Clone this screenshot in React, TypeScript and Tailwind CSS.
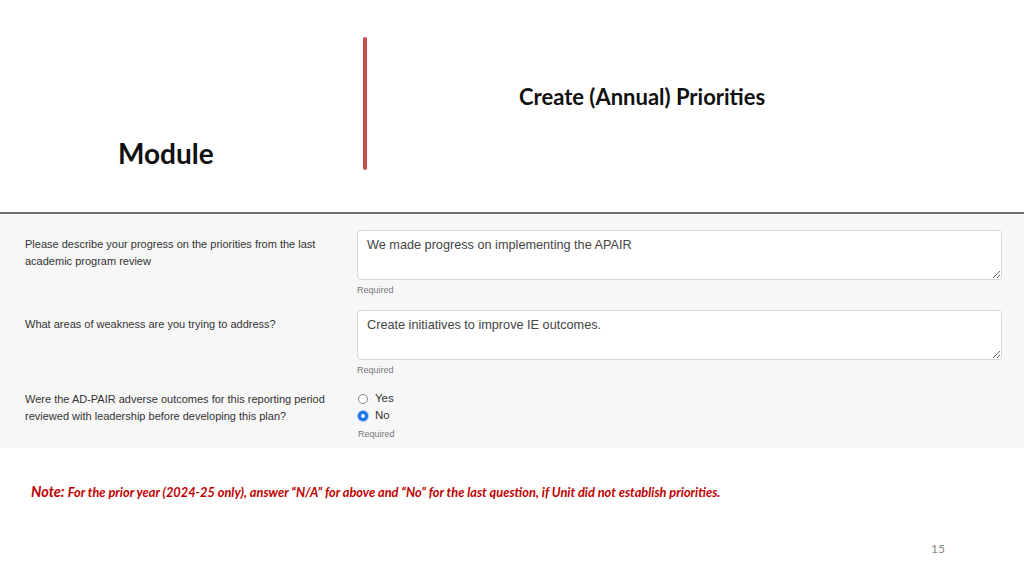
import React from "react";

const formFont = { fontFamily: '"Liberation Sans", Arial, sans-serif' };
const slideFont = { fontFamily: 'Lato, "Open Sans", sans-serif' };

function Required() {
  return <div className="mt-[3px] text-[9px] leading-[14px] text-[#777]">Required</div>;
}

function AreaField({ label, value }: { label: string; value: string }) {
  return (
    <div className="flex">
      <div className="w-[357px] shrink-0 pl-[25px] pr-[24px] pt-[6px] text-[11px] leading-[17px] text-[#333]">
        {label}
      </div>
      <div className="flex-1">
        <textarea
          readOnly
          defaultValue={value}
          className="block h-[50px] w-full rounded-[4px] border border-[#d6d6d6] bg-white px-[9px] pt-[6px] text-[12.7px] leading-[17px] text-[#444] outline-none"
          style={formFont}
        />
        <Required />
      </div>
    </div>
  );
}

function Radio({ checked, label }: { checked?: boolean; label: string }) {
  return (
    <div className="flex h-[17px] items-center gap-[7px] pl-[0px]">
      {checked ? (
        <span className="flex h-[10px] w-[10px] items-center justify-center rounded-full bg-[#1a73e8] ring-1 ring-[#9cc3f5]">
          <span className="h-[4px] w-[4px] rounded-full bg-white" />
        </span>
      ) : (
        <span className="h-[10px] w-[10px] rounded-full border border-[#888] bg-white" />
      )}
      <span className="text-[11.5px] text-[#333]">{label}</span>
    </div>
  );
}

export default function App() {
  return (
    <div className="flex h-[576px] w-[1024px] flex-col overflow-hidden bg-white">
      {/* title area */}
      <div className="flex h-[212px]" style={slideFont}>
        <div className="flex w-[363px] items-start pl-[118px] pt-[135px]">
          <h1 className="text-[28px] font-bold leading-[36px] text-[#111]">Module</h1>
        </div>
        <div className="pt-[37px]">
          <div className="h-[133px] w-[4px] rounded-full bg-[#c0504d]" />
        </div>
        <div className="pl-[152px] pt-[83px]">
          <h2 className="text-[22px] font-bold leading-[28px] text-[#111]">Create (Annual) Priorities</h2>
        </div>
      </div>
      <div className="h-[2px] bg-[#6f6f6f]" />

      {/* form panel */}
      <div className="flex h-[234px] flex-col gap-[13px] bg-[#f7f7f7] pr-[22px] pt-[16px]" style={formFont}>
        <AreaField
          label="Please describe your progress on the priorities from the last academic program review"
          value="We made progress on implementing the APAIR"
        />
        <AreaField label="What areas of weakness are you trying to address?" value="Create initiatives to improve IE outcomes." />
        <div className="flex">
          <div className="w-[357px] shrink-0 pl-[25px] pr-[20px] pt-[1px] text-[11px] leading-[17px] text-[#333]">
            Were the AD-PAIR adverse outcomes for this reporting period reviewed with leadership before developing this plan?
          </div>
          <div className="flex-1 pl-[1px]">
            <Radio label="Yes" />
            <Radio label="No" checked />
            <Required />
          </div>
        </div>
      </div>

      {/* note */}
      <div className="flex flex-1 flex-col" style={slideFont}>
        <p className="pl-[31px] pt-[31px] italic text-[#c00000]">
          <span className="text-[14.5px] font-bold">Note: </span>
          <span className="text-[12.8px] font-bold">
            For the prior year (2024-25 only), answer “N/A” for above and “No” for the last question, if Unit did not establish priorities.
          </span>
        </p>
        <div className="mt-auto flex justify-end pb-[18px] pr-[79px] text-[12px] text-[#888]">15</div>
      </div>
    </div>
  );
}
